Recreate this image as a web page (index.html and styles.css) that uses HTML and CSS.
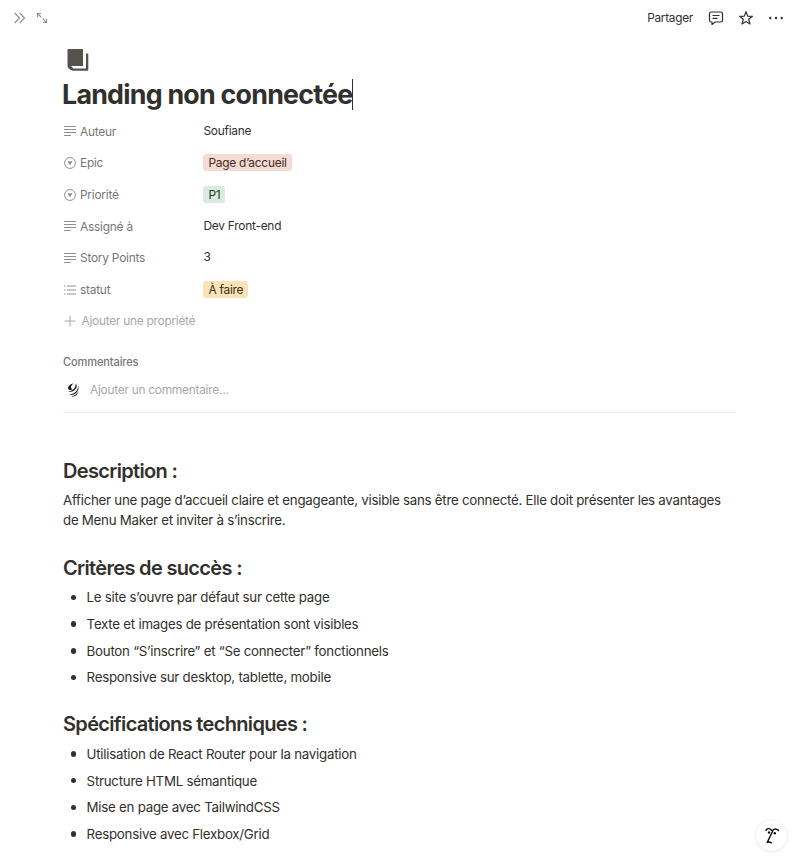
FILE: index.html
```html
<!DOCTYPE html>
<html lang="fr">
<head>
<meta charset="utf-8">
<title>Landing non connectée</title>
<link rel="stylesheet" href="styles.css">
</head>
<body>
<header class="topbar">
  <div class="nav">
    <svg width="14" height="14" viewBox="0 0 14 14"><path d="M1.700 2 6.500 7 1.700 12M6.700 2 11.500 7 6.700 12"/></svg>
    <svg class="expand" width="12" height="12" viewBox="0 0 12 12"><path d="M1.500 5V1.500H5M1.500 1.500 5.300 5.300M10.500 7v3.500H7M10.500 10.500 6.700 6.700"/></svg>
  </div>
  <div class="actions">
    <span class="share">Partager</span>
    <svg class="act" width="16" height="16" viewBox="0 0 16 16"><path d="M3 2h10q1.500 0 1.500 1.500v7Q14.500 12 13 12H7.200L4 14.400V12H3Q1.500 12 1.500 10.500v-7Q1.500 2 3 2ZM4.500 5.500h7M4.500 8.300h5"/></svg>
    <svg class="act" width="16" height="16" viewBox="0 0 16 16"><path d="m8 1.600 1.700 4.500 4.700.2-3.700 3 1.300 4.700L8 11.400 4 14l1.300-4.700-3.700-3 4.700-.2Z"/></svg>
    <svg class="more" width="16" height="16" viewBox="0 0 16 16"><circle cx="2.300" cy="8" r="1.200"/><circle cx="8" cy="8" r="1.200"/><circle cx="13.700" cy="8" r="1.200"/></svg>
  </div>
</header>
<main class="page">
  <svg class="book" width="22" height="24" viewBox="0 0 22 24"><path d="M1.200 1h14.300q.5 0 .5.500V18H4L6.500 20.500h12.500V5.500H21.300v16q0 1.300-1 1.300H5.500Q.5 21 .5 17.500V1.700Q.5 1 1.200 1Z"/></svg>
  <h1 class="title"><span>Landing non connectée</span><i class="caret"></i></h1>
  <dl class="props">
    <div class="row"><dt><svg class="ic" viewBox="0 0 12 12"><path d="M0 1.500h12M0 4.500h12M0 7.500h12M0 10.500h7"/></svg>Auteur</dt><dd>Soufiane</dd></div>
    <div class="row"><dt><svg class="ic" viewBox="0 0 12 12"><circle cx="6" cy="6" r="5.400"/><path class="solid" d="M3.500 4.300h5L6 8.500Z"/></svg>Epic</dt><dd><span class="tag red">Page d’accueil</span></dd></div>
    <div class="row"><dt><svg class="ic" viewBox="0 0 12 12"><circle cx="6" cy="6" r="5.400"/><path class="solid" d="M3.500 4.300h5L6 8.500Z"/></svg>Priorité</dt><dd><span class="tag green">P1</span></dd></div>
    <div class="row"><dt><svg class="ic" viewBox="0 0 12 12"><path d="M0 1.500h12M0 4.500h12M0 7.500h12M0 10.500h7"/></svg>Assigné à</dt><dd>Dev Front-end</dd></div>
    <div class="row"><dt><svg class="ic" viewBox="0 0 12 12"><path d="M0 1.500h12M0 4.500h12M0 7.500h12M0 10.500h7"/></svg>Story Points</dt><dd>3</dd></div>
    <div class="row"><dt><svg class="ic" viewBox="0 0 12 12"><path d="M0 2h1.500M3 2h9M0 6h1.500M3 6h9M0 10h1.500M3 10h9"/></svg>statut</dt><dd><span class="tag yellow">À faire</span></dd></div>
  </dl>
  <div class="add"><svg class="ic" viewBox="0 0 12 12"><path d="M6 .5v11M.5 6h11"/></svg>Ajouter une propriété</div>
  <section class="comments">
    <h3>Commentaires</h3>
    <div class="comment">
      <svg width="14" height="16" viewBox="0 0 14 16"><path d="M7.500 1.500C4.500 1.800 2 4.300 2.100 6.300c.1 1.900 2.500 2.300 4.900.7-1.700.1-2.400-.8-1.900-2.400.4-1.300 1.300-2.300 2.400-3.100ZM9.500 1.500c.5 2-.2 4-1.700 5.500C6.200 8.600 4.200 9.300 2 9c2.400 1.500 5.800.6 7.800-2.200 1.400-2 1.300-4.300-.3-5.300ZM12 3.500c.4 3-1.200 5.700-3.700 7.500-1.500 1-3.300 1.600-5 1.400 2.700 1.300 6 .2 7.900-2.600 1.500-2.200 1.700-4.600.8-6.300ZM12.300 9.500c-1.500 2.500-3.700 4.300-6.600 5.100 3.300.5 6-1.800 6.600-5.100Z"/></svg>
      <span>Ajouter un commentaire…</span>
    </div>
  </section>
  <article class="content">
    <h2>Description :</h2>
    <p>Afficher une page d’accueil claire et engageante, visible sans être connecté. Elle doit présenter les avantages<br>de Menu Maker et inviter à s’inscrire.</p>
    <h2>Critères de succès :</h2>
    <ul>
      <li>Le site s’ouvre par défaut sur cette page</li>
      <li>Texte et images de présentation sont visibles</li>
      <li>Bouton “S’inscrire” et “Se connecter” fonctionnels</li>
      <li>Responsive sur desktop, tablette, mobile</li>
    </ul>
    <h2>Spécifications techniques :</h2>
    <ul>
      <li>Utilisation de React Router pour la navigation</li>
      <li>Structure HTML sémantique</li>
      <li>Mise en page avec TailwindCSS</li>
      <li>Responsive avec Flexbox/Grid</li>
    </ul>
  </article>
</main>
<button class="assistant" aria-label="Assistant">
  <svg width="18" height="20" viewBox="0 0 18 20"><path d="M3 4.200Q5.500 1 8.500 4.300M9.500 4.600Q12.500 1.300 15.500 4.500M9.700 5 4.300 16.300q2.200-.6 4.200.5"/><circle cx="6" cy="6.500" r="1.200"/><circle cx="11.800" cy="7.200" r="1.200"/></svg>
</button>
</body>
</html>
```

FILE: styles.css
```css
* { box-sizing: border-box; }
body {
  margin: 0;
  height: 864px;
  overflow: hidden;
  background: #fff;
  color: #32302c;
  font-family: Inter, "Liberation Sans", sans-serif;
  font-size: 13.3px;
  letter-spacing: -0.26px;
}
svg { display: block; fill: none; flex: none; }
.topbar {
  height: 36px;
  padding: 0 16px 0 13px;
  display: flex;
  align-items: center;
  justify-content: space-between;
}
.nav { display: flex; align-items: center; gap: 9px; stroke: #91918e; stroke-width: 1.2; }
.expand { stroke-width: 1.1; }
.actions { display: flex; align-items: center; gap: 14px; }
.share { font-size: 11.8px; margin-right: 1px; }
.act { stroke: #32302c; stroke-width: 1.2; stroke-linejoin: round; }
.more { fill: #32302c; }
.page { padding: 12px 64px 0 63px; }
.book { margin-left: 4px; fill: #55534e; }
.title {
  margin: 5px 0 0 -1px;
  height: 34px;
  display: flex;
  align-items: center;
  font-size: 26.8px;
  font-weight: 700;
  letter-spacing: -0.76px;
  white-space: nowrap;
}
.caret { width: 1px; height: 31px; background: #32302c; }
.props { margin: 4.500px 0 0; letter-spacing: -0.23px; }
.row { display: flex; align-items: center; height: 31.67px; }
dt {
  width: 140.400px;
  display: flex;
  align-items: center;
  gap: 4px;
  color: #787774;
  font-size: 11.9px;
}
.ic { width: 12px; height: 12px; stroke: #91918e; stroke-width: 1; margin-left: 1px; }
.solid { fill: #91918e; stroke: none; }
dd { margin: 0; font-size: 11.9px; line-height: 16px; padding-bottom: 1.500px; }
dd:has(.tag) { padding-bottom: 0; }
.tag { display: block; height: 17px; line-height: 17px; padding: 0 5px; border-radius: 3px; }
.red { background: #f2dcd5; color: #4c2822; }
.green { background: #dbeadf; color: #1c3829; }
.yellow { background: #f9e4b6; color: #402c1b; }
.add {
  height: 31px;
  display: flex;
  align-items: center;
  gap: 5.500px;
  color: #a9a8a5;
  font-size: 11.9px;
}
.add .ic { stroke: #a9a8a5; }
.comments { height: 76.500px; border-bottom: 1px solid #efefee; padding-top: 19px; }
h3 { margin: 0; font-size: 11.1px; line-height: 14px; font-weight: 500; letter-spacing: -0.15px; color: #787774; }
.comment {
  height: 20px;
  margin-top: 10.500px;
  padding-left: 3px;
  display: flex;
  align-items: center;
  gap: 10px;
  color: #a9a8a5;
  font-size: 11.9px;
}
.comment svg { fill: #111; }
.content { padding-top: 45.200px; }
h2 { margin: 0; height: 26px; line-height: 26px; font-size: 20px; font-weight: 600; letter-spacing: -0.67px; }
p { margin: 6px 0 24.500px; line-height: 20px; white-space: nowrap; }
ul { margin: 3.500px 0 20.500px; padding: 0; list-style: none; letter-spacing: -0.25px; }
li { display: flex; align-items: center; height: 26.67px; padding-left: 7.500px; }
li::before { content: ""; width: 5.500px; height: 5.500px; margin-right: 10.600px; border-radius: 50%; background: #32302c; }
.assistant {
  position: absolute;
  right: 13px;
  bottom: 13px;
  width: 31px;
  height: 31px;
  padding: 0;
  display: grid;
  place-items: center;
  border: 0;
  border-radius: 50%;
  background: #fff;
  box-shadow: 0 0 2px rgba(0,0,0,.12), 0 2px 5px rgba(0,0,0,.04);
}
.assistant path { stroke: #111; stroke-width: 1.5; stroke-linecap: round; stroke-linejoin: round; }
.assistant circle { fill: #111; }
```
